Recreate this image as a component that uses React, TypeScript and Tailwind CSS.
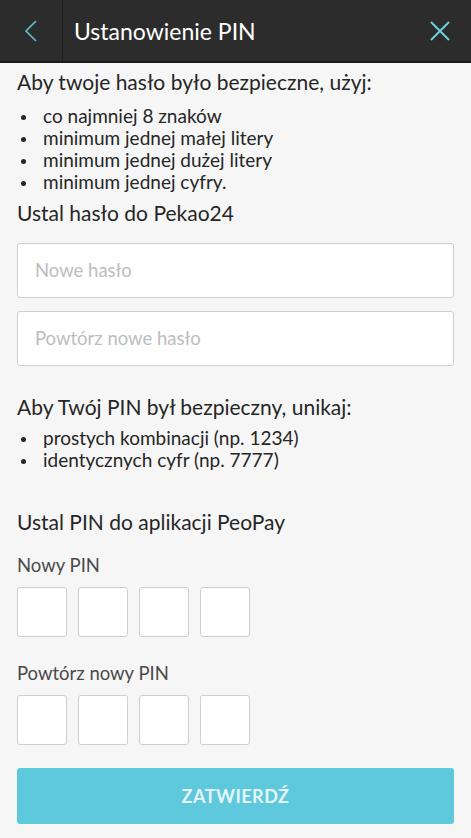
import React from 'react';

const font = { fontFamily: 'Lato, "Open Sans", sans-serif' };

const Bullet: React.FC<{ children: React.ReactNode }> = ({ children }) => (
  <li className="flex items-center h-[22px]">
    <span className="w-[5px] h-[5px] rounded-full bg-[#262626] ml-[4px] mr-[17px] mt-[3px]"></span>
    <span>{children}</span>
  </li>
);

const PinRow: React.FC = () => (
  <div className="flex gap-[11px]">
    {[0, 1, 2, 3].map(i => (
      <div key={i} className="w-[50px] h-[50px] bg-white border border-[#cfcfcf] rounded-[3px]"></div>
    ))}
  </div>
);

const App: React.FC = () => {
  return (
    <div className="w-[471px] h-[838px] bg-[#f6f6f6] text-[#262626] overflow-hidden" style={font}>
      <header className="h-[63px] bg-[#2d2c2c] border-b-2 border-[#1c1c1c] flex items-stretch">
        <button className="w-[63px] flex items-center justify-center border-r border-[#1f1f1f]">
          <svg width="14" height="22" viewBox="0 0 14 22" fill="none">
            <path d="M12 1 L2 11 L12 21" stroke="#5fc4cf" strokeWidth="1.6" />
          </svg>
        </button>
        <h1 className="flex-1 flex items-center pl-[11px] text-white text-[23px] pt-[1px]">Ustanowienie PIN</h1>
        <button className="w-[63px] flex items-center justify-center">
          <svg width="20" height="20" viewBox="0 0 20 20" fill="none">
            <path d="M1 1 L19 19 M19 1 L1 19" stroke="#6dd0dc" strokeWidth="2" />
          </svg>
        </button>
      </header>

      <main className="px-[17px]">
        <h2 className="text-[21px] mt-[6px] leading-[26px]">Aby twoje hasło było bezpieczne, użyj:</h2>
        <ul className="text-[19px] mt-[10px]">
          <Bullet>co najmniej 8 znaków</Bullet>
          <Bullet>minimum jednej małej litery</Bullet>
          <Bullet>minimum jednej dużej litery</Bullet>
          <Bullet>minimum jednej cyfry.</Bullet>
        </ul>
        <h2 className="text-[21px] mt-[7px] leading-[26px]">Ustal hasło do Pekao24</h2>

        <div className="mt-[17px] flex flex-col gap-[13px]">
          <div className="h-[55px] bg-white border border-[#cfcfcf] rounded-[3px] flex items-center px-[17px] text-[18.5px] text-[#bdbdbd]">
            Nowe hasło
          </div>
          <div className="h-[55px] bg-white border border-[#cfcfcf] rounded-[3px] flex items-center px-[17px] text-[18.5px] text-[#bdbdbd]">
            Powtórz nowe hasło
          </div>
        </div>

        <h2 className="text-[21px] mt-[28px] leading-[26px]">Aby Twój PIN był bezpieczny, unikaj:</h2>
        <ul className="text-[19px] mt-[7px]">
          <Bullet>prostych kombinacji (np. 1234)</Bullet>
          <Bullet>identycznych cyfr (np. 7777)</Bullet>
        </ul>

        <h2 className="text-[21px] mt-[38px] leading-[26px]">Ustal PIN do aplikacji PeoPay</h2>

        <div className="text-[18.5px] text-[#4a4a4a] mt-[19px] leading-[22px]">Nowy PIN</div>
        <div className="mt-[11px]">
          <PinRow />
        </div>

        <div className="text-[18.5px] text-[#4a4a4a] mt-[25px] leading-[22px]">Powtórz nowy PIN</div>
        <div className="mt-[11px]">
          <PinRow />
        </div>

        <button className="mt-[23px] w-full h-[56px] rounded-[3px] bg-[#5ec8dc] text-[#e4f6fa] font-bold text-[18px] tracking-[0.5px]">
          ZATWIERDŹ
        </button>
      </main>
    </div>
  );
};

export default App;
